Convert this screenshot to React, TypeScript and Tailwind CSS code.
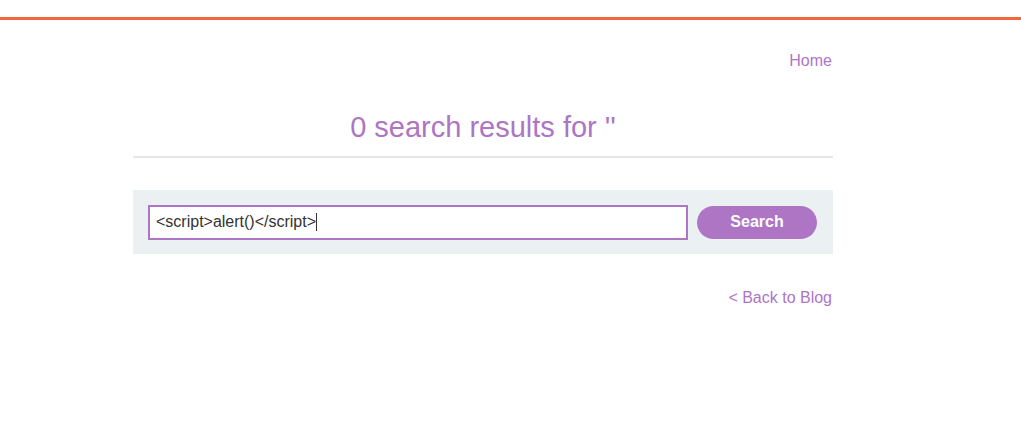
import React from "react";

export default function App() {
  return (
    <div className="min-h-[422px] bg-white" style={{ fontFamily: '"Liberation Sans", Arial, sans-serif' }}>
      <div className="pt-[17px]">
        <div className="h-[3px] bg-[#f0683a]" />
      </div>
      <div className="ml-[133px] w-[700px]">
        <div className="flex justify-end pt-[32px]">
          <a className="text-[16px] leading-[18px] text-[#ae75c5] mr-[1px]">Home</a>
        </div>
        <h1 className="mt-[41px] text-center text-[29px] leading-[32px] text-[#ae75c5] font-normal">
          0 search results for ''
        </h1>
        <div className="mt-[13px] h-[2px] bg-[#e6e6e6]" />
        <div className="mt-[32px] h-[64px] bg-[#ebf0f2] flex items-center pl-[15px] pr-[16px]">
          <div className="w-[540px] h-[35px] border-2 border-[#ae75c5] bg-white flex items-center px-[6px]">
            <span className="text-[16px] text-[#333]">&lt;script&gt;alert()&lt;/script&gt;</span>
            <span className="w-[1px] h-[18px] bg-[#333]" />
          </div>
          <div className="ml-[9px] w-[120px] h-[33px] rounded-full bg-[#ae75c5] flex items-center justify-center text-white font-bold text-[16px]">
            Search
          </div>
        </div>
        <div className="flex justify-end mt-[35px]">
          <a className="text-[16px] leading-[18px] text-[#ae75c5] mr-[1px]">&lt; Back to Blog</a>
        </div>
      </div>
    </div>
  );
}
